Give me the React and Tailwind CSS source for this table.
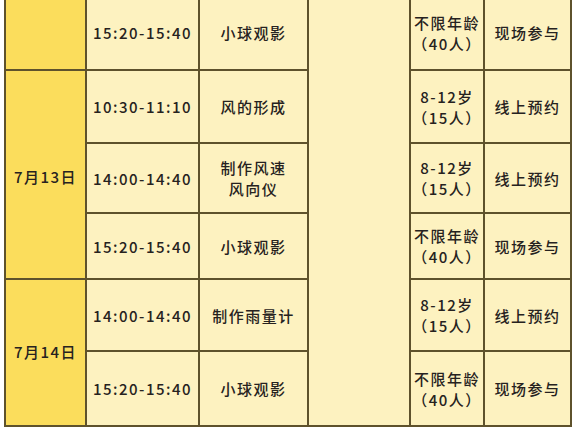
const rows = [
  { time: '15:20-15:40', name: ['小球观影'], age: ['不限年龄', '（40人）'], mode: '现场参与' },
  { time: '10:30-11:10', name: ['风的形成'], age: ['8-12岁', '（15人）'], mode: '线上预约' },
  { time: '14:00-14:40', name: ['制作风速', '风向仪'], age: ['8-12岁', '（15人）'], mode: '线上预约' },
  { time: '15:20-15:40', name: ['小球观影'], age: ['不限年龄', '（40人）'], mode: '现场参与' },
  { time: '14:00-14:40', name: ['制作雨量计'], age: ['8-12岁', '（15人）'], mode: '线上预约' },
  { time: '15:20-15:40', name: ['小球观影'], age: ['不限年龄', '（40人）'], mode: '现场参与' },
];

// row start lines in the grid (1-based)
const rowStart = ['row-start-1', 'row-start-2', 'row-start-3', 'row-start-4', 'row-start-5', 'row-start-6'];

const cell = 'bg-[#fdf2c0] flex flex-col items-center justify-center text-center leading-[21px]';

export default function App() {
  return (
    <div className="bg-white w-[575px] h-[431px] overflow-hidden">
      <div
        className="-mt-[6px] ml-[4px] w-[568px] p-[2px] bg-[#5e522c] text-[15px] font-medium tracking-[1.5px] text-[#262220]"
        style={{ fontFamily: '"Noto Sans CJK SC", "Noto Sans", sans-serif' }}
      >
        <div className="grid grid-cols-[79px_111px_107px_100px_72px_85px] grid-rows-[73px_71px_68px_64px_70px_73px] gap-[2px]">
          {/* date column */}
          <div className="col-start-1 row-start-1 bg-[#fbdd5c]" />
          <div className="col-start-1 row-start-2 row-span-3 bg-[#fbdd5c] flex items-center justify-center pt-[6px]">7月13日</div>
          <div className="col-start-1 row-start-5 row-span-2 bg-[#fbdd5c] flex items-center justify-center">7月14日</div>

          {/* merged empty column */}
          <div className="col-start-4 row-start-1 row-span-6 bg-[#fdf2c0]" />

          {rows.map((r, i) => (
            <div key={i} className="contents">
              <div className={`col-start-2 ${rowStart[i]} ${cell}`}>{r.time}</div>
              <div className={`col-start-3 ${rowStart[i]} ${cell}`}>
                {r.name.map(t => <span key={t}>{t}</span>)}
              </div>
              <div className={`col-start-5 ${rowStart[i]} ${cell}`}>
                {r.age.map(t => <span key={t}>{t}</span>)}
              </div>
              <div className={`col-start-6 ${rowStart[i]} ${cell}`}>{r.mode}</div>
            </div>
          ))}
        </div>
      </div>
    </div>
  );
}
